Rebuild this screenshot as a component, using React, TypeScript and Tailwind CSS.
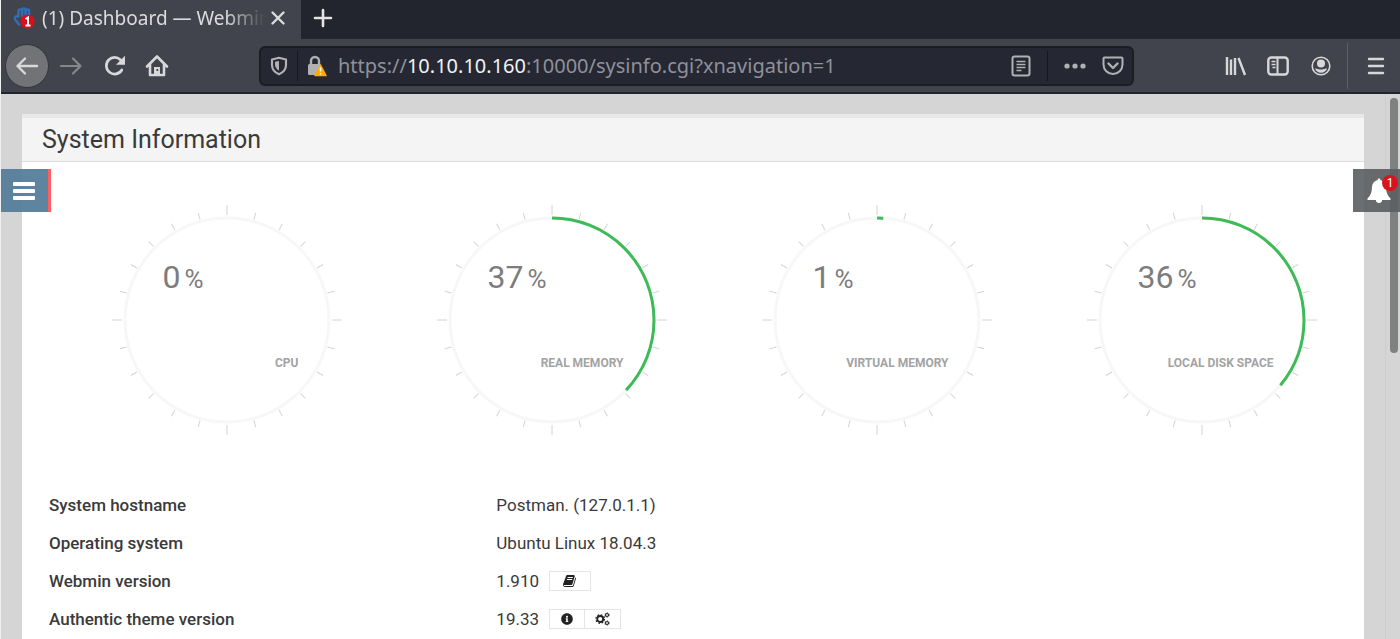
import React from 'react';
import { FaInfoCircle } from 'react-icons/fa';

interface Gauge {
  label: string;
  value: number;
}

const gauges: Gauge[] = [
  { label: 'CPU', value: 0 },
  { label: 'REAL MEMORY', value: 37 },
  { label: 'VIRTUAL MEMORY', value: 1 },
  { label: 'LOCAL DISK SPACE', value: 36 },
];

const RADIUS = 102;
const CIRCUMFERENCE = 2 * Math.PI * RADIUS;

function GaugeChart({ label, value }: Gauge) {
  const ticks = Array.from({ length: 24 }, (_, i) => i * 15);

  return (
    <div className="relative w-[232px] h-[232px]">
      <svg viewBox="-116 -116 232 232" className="w-full h-full" fill="none">
        {ticks.map((deg) => (
          <line
            key={deg}
            x1="0"
            x2="0"
            y1={deg % 90 === 0 ? -105 : -104}
            y2={deg % 90 === 0 ? -115 : -111}
            stroke="#d4d4d4"
            strokeWidth="1"
            transform={`rotate(${deg})`}
          />
        ))}
        <circle r={RADIUS} stroke="#f7f7f7" strokeWidth="3" />
        {value > 0 && (
          <circle
            r={RADIUS}
            stroke="#3dbb58"
            strokeWidth="3"
            strokeDasharray={`${(CIRCUMFERENCE * value) / 100} ${CIRCUMFERENCE}`}
            transform="rotate(-90)"
          />
        )}
      </svg>
      <div className="absolute inset-0 flex flex-col justify-between pt-[57px] pb-[63px] pl-[52px] pr-11">
        <div className="flex items-baseline gap-1 text-[32px] leading-8 text-[#7c7c7c]">
          {value}
          <span className="text-[26px]">%</span>
        </div>
        <div className="text-right text-xs font-bold leading-5 text-[#a3a3a3] whitespace-nowrap">{label}</div>
      </div>
    </div>
  );
}

function Favicon() {
  return (
    <svg width="22" height="22" viewBox="0 0 22 22" fill="none">
      <g stroke="#2f6fb7" strokeWidth="2.4" strokeLinecap="round" strokeLinejoin="round">
        <path d="M5.500 9V4.200a1.800 1.800 0 0 1 3.600 0V9" />
        <path d="M9.100 7V3.200a1.800 1.800 0 0 1 3.600 0V8" />
        <path d="M12.700 7V4.200a1.700 1.700 0 0 1 3.400 0V9" />
        <path d="M5.500 9.500C2 8.500 1 11 2.500 13l3.500 4.500" />
      </g>
      <circle cx="14.500" cy="14.500" r="7" fill="#de0d1b" />
      <path d="M12.500 12l2.500-1.500v8M12.500 18.500h5" stroke="#fff" strokeWidth="2" />
    </svg>
  );
}

function BackIcon() {
  return (
    <svg width="24" height="24" viewBox="0 0 24 24" fill="none" stroke="currentColor" strokeWidth="2.400" strokeLinecap="round" strokeLinejoin="round">
      <path d="M22 12H2.500M10 4.500L2.500 12l7.500 7.500" />
    </svg>
  );
}

function ForwardIcon() {
  return (
    <svg width="24" height="24" viewBox="0 0 24 24" fill="none" stroke="currentColor" strokeWidth="2.200" strokeLinecap="round" strokeLinejoin="round">
      <path d="M2 12h19.500M14 4.500l7.500 7.500-7.500 7.500" />
    </svg>
  );
}

function ReloadIcon() {
  return (
    <svg width="24" height="24" viewBox="0 0 24 24" fill="none">
      <path d="M18.300 6.800A8.300 8.300 0 1 0 18.800 16" stroke="currentColor" strokeWidth="2.700" strokeLinecap="round" />
      <path d="M22 1.800v9h-9z" fill="currentColor" />
    </svg>
  );
}

function HomeIcon() {
  return (
    <svg width="24" height="24" viewBox="0 0 24 24" fill="none">
      <path d="M2 12.500L12 2.500l10 10M5 10.500V21h14V10.500" stroke="currentColor" strokeWidth="2.600" strokeLinecap="round" strokeLinejoin="round" />
      <path d="M9 21v-8h6v8z" fill="currentColor" />
      <rect x="11.500" y="15" width="1.700" height="2" fill="#42444d" />
    </svg>
  );
}

function ShieldIcon() {
  return (
    <svg width="20" height="20" viewBox="0 0 20 20" fill="none">
      <path d="M10 1.800l7 1.700v5.500c0 4.200-3 7.500-7 9.200-4-1.700-7-5-7-9.200V3.500z" stroke="currentColor" strokeWidth="2.200" strokeLinejoin="round" />
      <path d="M10 5v9.800c-2.500-1.500-4-3.500-4-6.200V5.800z" fill="currentColor" />
    </svg>
  );
}

function LockWarningIcon() {
  return (
    <svg width="22" height="22" viewBox="0 0 22 22" fill="none">
      <path d="M5 10V6a4 4 0 0 1 8 0V10" stroke="#b1b1b3" strokeWidth="2.400" />
      <rect x="2" y="9" width="13" height="11" rx="1.500" fill="#b1b1b3" />
      <path d="M14.500 10l5.500 10.500H9z" fill="#ffa90a" stroke="#ffa90a" strokeWidth="1.500" strokeLinejoin="round" />
      <path d="M14.500 12.500v4M14.500 18v1.500" stroke="#fff" strokeWidth="1.500" />
    </svg>
  );
}

function ReaderIcon() {
  return (
    <svg width="20" height="22" viewBox="0 0 20 22" fill="none" stroke="currentColor">
      <rect x="1.500" y="1.500" width="17" height="19" rx="2" strokeWidth="2" />
      <path d="M5.500 6.500h9M5.500 9.500h9M5.500 12.500h9M5.500 15.500h5" strokeWidth="1.500" />
    </svg>
  );
}

function PocketIcon() {
  return (
    <svg width="22" height="20" viewBox="0 0 22 20" fill="none" stroke="currentColor" strokeLinecap="round" strokeLinejoin="round">
      <path d="M2.500 1.500h17a1 1 0 0 1 1 1v6a9.500 9.500 0 0 1-19 0v-6a1 1 0 0 1 1-1z" strokeWidth="2" />
      <path d="M6.500 7.500l4.500 4.500 4.500-4.500" strokeWidth="2.400" />
    </svg>
  );
}

function LibraryIcon() {
  return (
    <svg width="22" height="20" viewBox="0 0 22 20" fill="none" stroke="currentColor" strokeWidth="2.400">
      <path d="M2 1v18M6 3.500V19M10 2v17M13.500 2l6.500 17" />
    </svg>
  );
}

function SidebarIcon() {
  return (
    <svg width="22" height="20" viewBox="0 0 22 20" fill="none" stroke="currentColor">
      <rect x="1.300" y="1.500" width="19.400" height="17" rx="3" strokeWidth="2.400" />
      <path d="M10.500 2v16" strokeWidth="2" />
      <path d="M4.500 5.500h4M4.500 8.500h4M5.500 11.500h3" strokeWidth="1.500" />
    </svg>
  );
}

function AccountIcon() {
  return (
    <svg width="20" height="20" viewBox="0 0 20 20" fill="none">
      <circle cx="10" cy="10" r="8.800" stroke="currentColor" strokeWidth="1.600" />
      <circle cx="10" cy="7.500" r="4" fill="currentColor" />
      <path d="M4 12.500c2 0 2.500 1 6 1s4-1 6-1c-.8 2.500-3 4.300-6 4.300s-5.200-1.800-6-4.300z" fill="currentColor" />
    </svg>
  );
}

function BellIcon() {
  return (
    <svg width="24" height="26" viewBox="0 0 24 26" fill="#fff">
      <path d="M12 .5c.9 0 1.400.7 1.300 1.600 3.600.7 5.500 3.500 5.700 7 .3 6 1.400 8.500 4.500 11.400v1.400H.5v-1.400C3.600 17.600 4.700 15.100 5 9.100c.2-3.500 2.100-6.300 5.700-7C10.600 1.200 11.100.5 12 .5z" />
      <path d="M8.800 21.500h6.400a3.200 3.500 0 0 1-6.400 0z" />
    </svg>
  );
}

function BookIcon() {
  return (
    <svg width="14" height="14" viewBox="0 0 1792 1792" fill="currentColor">
      <path d="M1639 478q40 57 18 129l-275 906q-19 64-76.500 107.500t-122.500 43.500h-923q-77 0-148.500-53.500t-99.500-131.500q-24-67-2-127 0-4 3-27t4-37q1-8-3-21.500t-3-19.500q2-11 8-21t16.500-23.500 16.500-23.500q23-38 45-91.500t30-91.500q3-10 .5-30t-.5-28q3-11 17-28t17-23q21-36 42-92t25-90q1-9-2.500-32t.5-28q4-13 22-30.500t22-22.500q19-26 42.500-84.500t27.500-96.500q1-8-3-25.500t-2-26.500q2-8 9-18t18-23 17-21q8-12 16.500-30.500t15-35 16-36 19.500-32 26.500-23.500 36-11.500 47.500 5.500l-1 3q38-9 51-9h761q74 0 114 56t18 130l-274 906q-36 119-71.500 153.500t-128.500 34.500h-869q-27 0-38 15-11 16-1 43 24 70 144 70h923q29 0 56-15.500t35-41.500l300-987q7-22 5-57 38 15 59 43zm-1064 2q-4 13 2 22.500t20 9.500h608q13 0 25.500-9.500t16.500-22.500l21-64q4-13-2-22.500t-20-9.500h-608q-13 0-25.500 9.500t-16.500 22.500zm-83 256q-4 13 2 22.500t20 9.500h608q13 0 25.500-9.500t16.500-22.500l21-64q4-13-2-22.500t-20-9.500h-608q-13 0-25.500 9.500t-16.500 22.500z" />
    </svg>
  );
}

function CogsIcon() {
  return (
    <svg width="15" height="14" viewBox="0 0 15 14" fill="none" stroke="currentColor">
      <circle cx="5.200" cy="7" r="3" strokeWidth="1.800" />
      <circle cx="5.200" cy="7" r="4.300" strokeWidth="1.200" strokeDasharray="1.690 1.690" />
      <circle cx="12" cy="3" r="1.500" strokeWidth="1.200" />
      <circle cx="12" cy="3" r="2.300" strokeWidth=".6" strokeDasharray="1.200 1.200" />
      <circle cx="12" cy="11" r="1.500" strokeWidth="1.200" />
      <circle cx="12" cy="11" r="2.300" strokeWidth=".6" strokeDasharray="1.200 1.200" />
    </svg>
  );
}

function BrowserTabs() {
  return (
    <div className="flex h-[39px] bg-[#23252e]">
      <div className="flex items-center w-[300px] pl-3 pb-1 pr-[14px] bg-[#42444d] text-[#dcdcde]">
        <Favicon />
        <span className="flex-1 ml-[7px] overflow-hidden whitespace-nowrap text-[19px] leading-7 [mask-image:linear-gradient(to_right,black_82%,transparent)]">
          (1) Dashboard — Webmin
        </span>
        <button aria-label="Close tab" className="ml-1">
          <svg width="18" height="18" viewBox="0 0 18 18" stroke="currentColor" strokeWidth="2.400" strokeLinecap="round">
            <path d="M3.500 3.500l11 11M14.500 3.500l-11 11" />
          </svg>
        </button>
      </div>
      <button aria-label="New tab" className="ml-3 pb-1 text-[#e4e4e4]">
        <svg width="20" height="20" viewBox="0 0 20 20" stroke="currentColor" strokeWidth="2.600" strokeLinecap="round">
          <path d="M10 2v16M2 10h16" />
        </svg>
      </button>
    </div>
  );
}

function BrowserToolbar() {
  return (
    <div className="flex items-center h-[55px] pl-1 pr-[14px] bg-[#42444d] border-b-2 border-[#23252d] text-[#d8d8d9]">
      <button aria-label="Back" className="flex items-center justify-center w-11 h-11 rounded-full bg-[#727376] border border-[#34363e]">
        <BackIcon />
      </button>
      <button aria-label="Forward" className="ml-[10px] text-[#86878c]"><ForwardIcon /></button>
      <button aria-label="Reload" className="ml-5"><ReloadIcon /></button>
      <button aria-label="Home" className="ml-[18px]"><HomeIcon /></button>

      <div className="flex flex-1 items-center h-10 ml-[90px] px-2 rounded-md bg-[#252833] border-2 border-[#1b1d25] text-[#b1b1b3]">
        <button aria-label="Tracking protection"><ShieldIcon /></button>
        <div className="w-px h-[30px] mx-2 bg-[#15171d]" />
        <button aria-label="Connection is not secure"><LockWarningIcon /></button>
        <div
          role="textbox"
          aria-label="Address"
          contentEditable
          suppressContentEditableWarning
          className="flex-1 ml-[10px] pt-px text-xl leading-7 text-[#90919a] whitespace-nowrap outline-none"
        >
          https://<span className="text-[#f2f2f4]">10.10.10.160</span>:10000/sysinfo.cgi?xnavigation=1
        </div>
        <button aria-label="Reader view"><ReaderIcon /></button>
        <div className="w-px h-[30px] mx-4 bg-[#15171d]" />
        <button aria-label="Page actions">
          <svg width="22" height="6" viewBox="0 0 22 6" fill="currentColor">
            <circle cx="3" cy="3" r="2.600" />
            <circle cx="11" cy="3" r="2.600" />
            <circle cx="19" cy="3" r="2.600" />
          </svg>
        </button>
        <button aria-label="Save to Pocket" className="ml-4"><PocketIcon /></button>
      </div>

      <div className="flex items-center ml-[91px]">
        <button aria-label="Library"><LibraryIcon /></button>
        <button aria-label="Sidebars" className="ml-5"><SidebarIcon /></button>
        <button aria-label="Account" className="ml-[22px]"><AccountIcon /></button>
        <div className="w-px h-[46px] ml-4 mr-[18px] bg-[#5c5e68]" />
        <button aria-label="Open menu">
          <svg width="20" height="20" viewBox="0 0 20 20" stroke="currentColor" strokeWidth="2.400" strokeLinecap="round">
            <path d="M3 3h14M3 10h14M3 17h14" />
          </svg>
        </button>
      </div>
    </div>
  );
}

const iconButton = 'flex items-center justify-center h-5 border border-[#e4e4e4] bg-white text-[#222]';

function SystemInfoTable() {
  return (
    <table className="w-full mt-[50px] table-fixed text-left text-[17px] leading-6 text-[#3a3a3a]">
      <tbody>
        <tr className="h-[38px]">
          <th className="w-1/3 pl-[27px] font-medium">System hostname</th>
          <td className="pl-[27px]">Postman. (127.0.1.1)</td>
        </tr>
        <tr className="h-[38px]">
          <th className="pl-[27px] font-medium">Operating system</th>
          <td className="pl-[27px]">Ubuntu Linux 18.04.3</td>
        </tr>
        <tr className="h-[38px]">
          <th className="pl-[27px] font-medium">Webmin version</th>
          <td className="pl-[27px]">
            <div className="flex items-center gap-[10px]">
              1.910
              <button aria-label="Changelog" className={`${iconButton} w-[42px]`}><BookIcon /></button>
            </div>
          </td>
        </tr>
        <tr className="h-[38px]">
          <th className="pl-[27px] font-medium">Authentic theme version</th>
          <td className="pl-[27px]">
            <div className="flex items-center gap-[10px]">
              19.33
              <div className="flex">
                <button aria-label="Theme information" className={`${iconButton} w-9`}><FaInfoCircle size={12} /></button>
                <button aria-label="Theme settings" className={`${iconButton} w-9 border-l-0`}><CogsIcon /></button>
              </div>
            </div>
          </td>
        </tr>
      </tbody>
    </table>
  );
}

export default function App() {
  return (
    <div className="flex flex-col min-h-screen pl-px bg-[#f0f0f0]">
      <header className="font-['Noto_Sans',sans-serif]">
        <BrowserTabs />
        <BrowserToolbar />
      </header>

      <div className="relative flex flex-1 bg-[#d5d5d5] font-['Roboto',sans-serif]">
        <main className="flex flex-1 min-w-0 pt-5 px-[21px]">
          <section className="flex-1 min-w-0 border-t-4 border-[#e8e8e8] bg-white">
            <h1 className="h-11 px-5 border-b border-[#dcdcdc] bg-[#f4f4f4] text-[25px] leading-[43px] text-[#3a3a3a]">
              System Information
            </h1>
            <div className="grid grid-cols-4 justify-items-center pt-[42px] pl-[42px]">
              {gauges.map((g) => (
                <GaugeChart key={g.label} label={g.label} value={g.value} />
              ))}
            </div>
            <SystemInfoTable />
          </section>
        </main>

        <div className="w-[15px] pt-1 pl-1 border-l border-[#d3cbc4]">
          <div className="w-2 h-[255px] rounded-full bg-[#7e8181]" />
        </div>

        <button aria-label="Open navigation" className="absolute left-0 top-[75px] flex items-center w-[50px] h-[43px] pl-3 bg-[#557d9a]/95 border-r-3 border-[#ff5f62]">
          <svg width="22" height="20" viewBox="0 0 22 20" fill="#fff">
            <rect width="22" height="4" y="1" rx="1" />
            <rect width="22" height="4" y="8" rx="1" />
            <rect width="22" height="4" y="15" rx="1" />
          </svg>
        </button>

        <button aria-label="Notifications" className="absolute right-0 top-[75px] flex items-center w-[47px] h-[43px] pl-[14px] bg-[#5b5e61]/90">
          <BellIcon />
          <span className="absolute right-[2px] top-[6px] flex items-center justify-center w-4 h-4 rounded-full bg-[#d9141e] text-xs leading-4 text-white">
            1
          </span>
        </button>
      </div>
    </div>
  );
}
